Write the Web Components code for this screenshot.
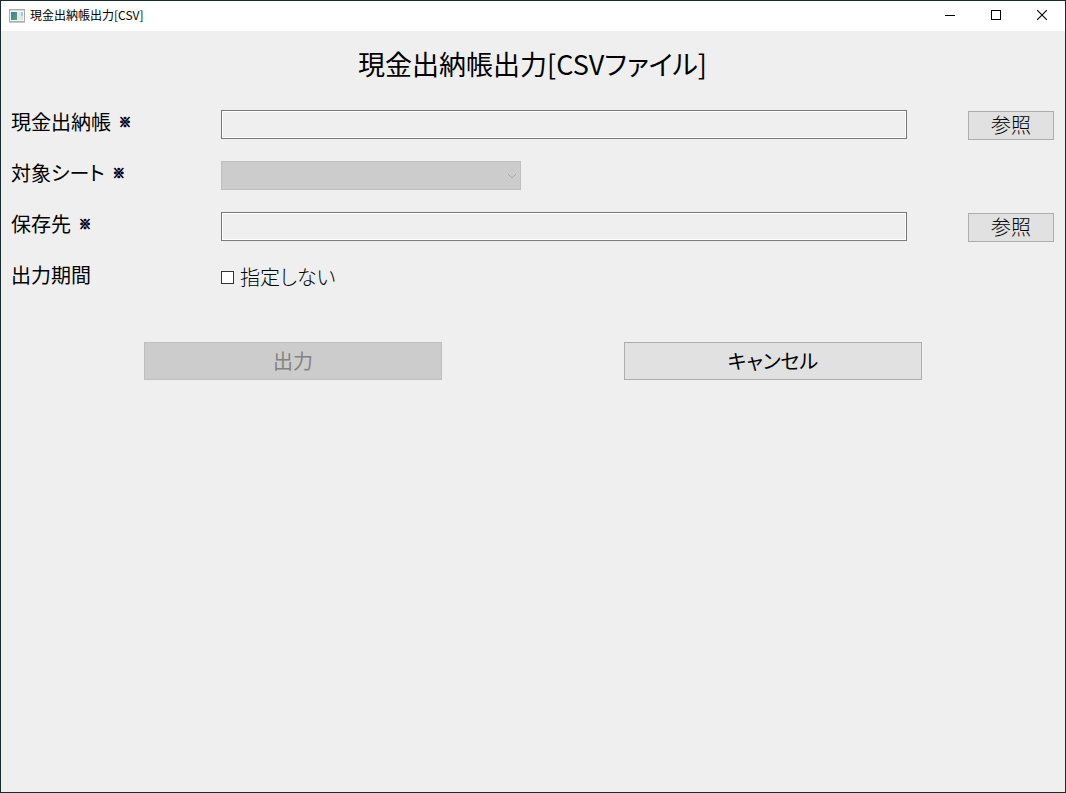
<!DOCTYPE html>
<html lang="ja">
<head>
<meta charset="UTF-8">
<title>現金出納帳出力[CSV]</title>
<style>
    html, body {
        height: 100%;
        margin: 0;
    }
    body {
        font-family: "Noto Sans CJK JP", sans-serif;
        font-size: 20px;
        font-feature-settings: "palt";
        color: #000;
    }
</style>
</head>
<body>
<app-window caption="現金出納帳出力[CSV]">
    <page-title>現金出納帳出力[CSVファイル]</page-title>
    <file-field label="現金出納帳"></file-field>
    <select-field label="対象シート"></select-field>
    <file-field label="保存先"></file-field>
    <check-field label="出力期間">指定しない</check-field>
    <action-button slot="actions" disabled>出力</action-button>
    <action-button slot="actions">キャンセル</action-button>
</app-window>

<script>
// 入力行で共通のスタイル
const rowStyle = `
    :host {
        display: grid;
        grid-template-columns: 210px 1fr 86px;
        align-items: center;
        height: 30px;
        margin-bottom: 21px;
    }
    .name {
        display: flex;
        align-items: center;
        gap: 8px;
        line-height: 30px;
        padding-bottom: 6px;
    }
    .mark {
        font-size: 12px;
        font-weight: 700;
        color: #000020;
        -webkit-text-stroke: 1px #000020;
    }
`;

class AppWindow extends HTMLElement {
    constructor() {
        super();
        this.attachShadow({ mode: 'open' });
    }

    connectedCallback() {
        this.shadowRoot.innerHTML = `
            <style>
                :host {
                    display: flex;
                    flex-direction: column;
                    box-sizing: border-box;
                    min-height: 100%;
                    border: 1px solid #1a2a32;
                    background: #efefef;
                }
                header {
                    display: flex;
                    align-items: center;
                    height: 30px;
                    padding-left: 8px;
                    background: #fff;
                }
                .caption {
                    flex: 1;
                    margin-left: 5px;
                    font-size: 12px;
                    line-height: 28px;
                    padding-bottom: 2px;
                }
                header button {
                    display: flex;
                    align-items: center;
                    justify-content: center;
                    width: 46px;
                    height: 30px;
                    padding: 0 0 2px;
                    border: 0;
                    background: none;
                }
                svg {
                    display: block;
                }
                main {
                    padding: 0 11px 0 10px;
                }
                footer {
                    display: flex;
                    justify-content: center;
                    gap: 182px;
                    padding: 31px 0;
                }
            </style>
            <header>
                <svg width="16" height="14" viewBox="0 0 16 14">
                    <defs>
                        <linearGradient id="pane" x1="0" y1="0" x2="1" y2="1">
                            <stop offset="0" stop-color="#4774a0"/>
                            <stop offset="1" stop-color="#55a878"/>
                        </linearGradient>
                    </defs>
                    <rect x="0.5" y="0.5" width="15" height="12" fill="#f6f6f6" stroke="#a9adb1"/>
                    <path d="M1 1.5h14" stroke="#d3d8dc"/>
                    <rect x="2" y="3" width="6" height="8" fill="url(#pane)"/>
                    <rect x="8" y="3" width="4" height="8" fill="#e6e9eb"/>
                    <rect x="12" y="3" width="2" height="4" fill="#a7c6df"/>
                    <rect x="12" y="7" width="2" height="4" fill="#d9e5dd"/>
                    <path d="M0 13.5h16" stroke="#c9cccf"/>
                </svg>
                <span class="caption">${this.getAttribute('caption')}</span>
                <button aria-label="最小化">
                    <svg width="10" height="10" viewBox="0 0 10 10"><path d="M0 5.5h10" stroke="#000"/></svg>
                </button>
                <button aria-label="最大化">
                    <svg width="10" height="10" viewBox="0 0 10 10"><rect x="0.5" y="0.5" width="9" height="9" fill="none" stroke="#000"/></svg>
                </button>
                <button aria-label="閉じる">
                    <svg width="10" height="10" viewBox="0 0 10 10"><path d="M0 0l10 10M10 0L0 10" stroke="#000" stroke-width="1.1"/></svg>
                </button>
            </header>
            <main><slot></slot></main>
            <footer><slot name="actions"></slot></footer>
        `;
    }
}

class PageTitle extends HTMLElement {
    connectedCallback() {
        this.attachShadow({ mode: 'open' }).innerHTML = `
            <style>
                :host {
                    display: block;
                    margin-bottom: 10px;
                }
                h1 {
                    margin: 0;
                    font-size: 27px;
                    font-weight: 400;
                    line-height: 66px;
                    text-align: center;
                }
            </style>
            <h1><slot></slot></h1>
        `;
    }
}

class FileField extends HTMLElement {
    connectedCallback() {
        this.attachShadow({ mode: 'open' }).innerHTML = `
            <style>
                ${rowStyle}
                input {
                    box-sizing: border-box;
                    height: 29px;
                    margin: 0 61px 1px 0;
                    min-width: 0;
                    padding: 0 4px;
                    border: 1px solid #7a7a7a;
                    border-radius: 0;
                    background: #efefef;
                    box-shadow: inset 0 0 0 1px #fff;
                    font: inherit;
                }
                button {
                    height: 29px;
                    margin-top: 1px;
                    padding: 0 0 2px;
                    border: 1px solid #adadad;
                    background: #e1e1e1;
                    color: #000;
                    font: inherit;
                    font-weight: 300;
                    line-height: 25px;
                }
            </style>
            <label class="name" for="path">${this.getAttribute('label')}<span class="mark">※</span></label>
            <input id="path" type="text" readonly>
            <button type="button">参照</button>
        `;
    }
}

class SelectField extends HTMLElement {
    connectedCallback() {
        this.attachShadow({ mode: 'open' }).innerHTML = `
            <style>
                ${rowStyle}
                .box {
                    display: grid;
                    align-items: center;
                    width: 300px;
                    margin-bottom: 1px;
                }
                select, svg {
                    grid-area: 1 / 1;
                }
                select {
                    appearance: none;
                    width: 100%;
                    height: 29px;
                    border: 1px solid #bfbfbf;
                    border-radius: 0;
                    background: #ccc;
                    opacity: 1;
                    font: inherit;
                }
                svg {
                    justify-self: end;
                    margin-right: 4px;
                    pointer-events: none;
                }
            </style>
            <label class="name" for="sheet">${this.getAttribute('label')}<span class="mark">※</span></label>
            <div class="box">
                <select id="sheet" disabled></select>
                <svg width="10" height="6" viewBox="0 0 10 6"><path d="M1 1l4 4 4-4" fill="none" stroke="#a3a3a3"/></svg>
            </div>
        `;
    }
}

class CheckField extends HTMLElement {
    connectedCallback() {
        this.attachShadow({ mode: 'open' }).innerHTML = `
            <style>
                ${rowStyle}
                .check {
                    display: flex;
                    align-items: center;
                    gap: 6px;
                    font-weight: 300;
                    line-height: 30px;
                    padding-bottom: 2px;
                }
                input {
                    appearance: none;
                    width: 13px;
                    height: 13px;
                    margin: 0;
                    border: 1px solid #333;
                    background: #fff;
                }
                input:checked {
                    background: #333;
                    box-shadow: inset 0 0 0 2px #fff;
                }
            </style>
            <span class="name">${this.getAttribute('label')}</span>
            <label class="check"><input type="checkbox"><slot></slot></label>
        `;
    }
}

class ActionButton extends HTMLElement {
    connectedCallback() {
        const disabled = this.hasAttribute('disabled') ? 'disabled' : '';
        this.attachShadow({ mode: 'open' }).innerHTML = `
            <style>
                :host {
                    display: block;
                    width: 298px;
                }
                button {
                    width: 100%;
                    height: 38px;
                    padding: 0;
                    border: 1px solid #adadad;
                    background: #e1e1e1;
                    color: #000;
                    font: inherit;
                    line-height: 36px;
                }
                button:disabled {
                    border-color: #bfbfbf;
                    background: #ccc;
                    color: #838383;
                }
            </style>
            <button type="button" ${disabled}><slot></slot></button>
        `;
    }
}

customElements.define('app-window', AppWindow);
customElements.define('page-title', PageTitle);
customElements.define('file-field', FileField);
customElements.define('select-field', SelectField);
customElements.define('check-field', CheckField);
customElements.define('action-button', ActionButton);
</script>
</body>
</html>
